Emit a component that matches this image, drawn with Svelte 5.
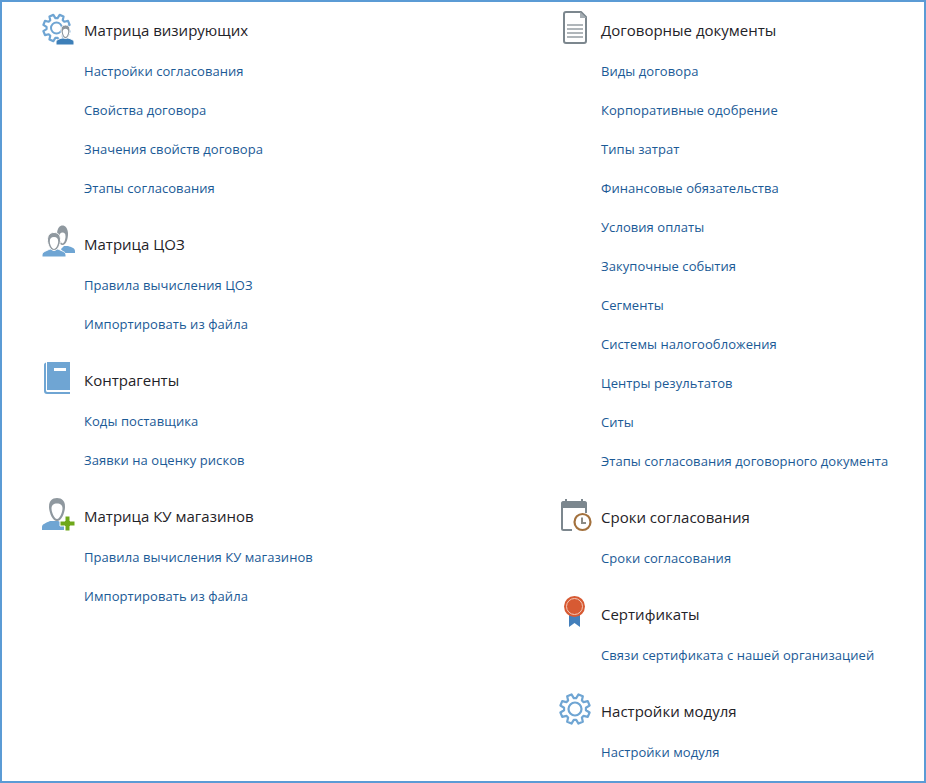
<script lang="ts">
  const leftSections = [
    { title: 'Матрица визирующих', icon: 'gearUser', links: ['Настройки согласования', 'Свойства договора', 'Значения свойств договора', 'Этапы согласования'] },
    { title: 'Матрица ЦОЗ', icon: 'users', links: ['Правила вычисления ЦОЗ', 'Импортировать из файла'] },
    { title: 'Контрагенты', icon: 'book', links: ['Коды поставщика', 'Заявки на оценку рисков'] },
    { title: 'Матрица КУ магазинов', icon: 'userPlus', links: ['Правила вычисления КУ магазинов', 'Импортировать из файла'] }
  ];
  const rightSections = [
    { title: 'Договорные документы', icon: 'doc', links: ['Виды договора', 'Корпоративные одобрение', 'Типы затрат', 'Финансовые обязательства', 'Условия оплаты', 'Закупочные события', 'Сегменты', 'Системы налогообложения', 'Центры результатов', 'Ситы', 'Этапы согласования договорного документа'] },
    { title: 'Сроки согласования', icon: 'calendar', links: ['Сроки согласования'] },
    { title: 'Сертификаты', icon: 'medal', links: ['Связи сертификата с нашей организацией'] },
    { title: 'Настройки модуля', icon: 'gear', links: ['Настройки модуля'] }
  ];
  const columns = [leftSections, rightSections];

  // 8-tooth gear outline
  function gear(cx: number, cy: number, rOut: number, rIn: number) {
    const step = Math.PI / 4;
    const pts: string[] = [];
    const at = (r: number, a: number) => `${(cx + r * Math.cos(a)).toFixed(2)} ${(cy + r * Math.sin(a)).toFixed(2)}`;
    for (let i = 0; i < 8; i++) {
      const a = i * step + Math.PI / 8;
      pts.push(at(rIn, a - step * 0.36), at(rOut, a - step * 0.2), at(rOut, a + step * 0.2), at(rIn, a + step * 0.36));
    }
    return 'M' + pts.join('L') + 'z';
  }
</script>

<div class="page">
  {#each columns as sections}
    <div class="column">
      {#each sections as section}
        <section class="section">
          <div class="heading">
            <svg class="icon" width="34" height="34" viewBox="0 0 34 34" fill="none">
              {#if section.icon === 'gearUser'}
                <path d={gear(15.5, 17, 13.500, 10)} stroke="#6fa5d3" stroke-width="2.200" stroke-linejoin="round"/>
                <circle cx="15.500" cy="17" r="5.500" stroke="#6fa5d3" stroke-width="2"/>
                <path d="M15 34v-3c0-2 3-3 6-4h6c3 1 6 2 6 4v3z" fill="#3d7fb8" stroke="#fff" stroke-width="1"/>
                <path d="M20 19c0-3.500 1.800-5 4.500-5s4.500 1.500 4.500 5c0 3.500-1.800 8.500-4.500 8.500S20 22.500 20 19z" fill="#8c959c" stroke="#fff" stroke-width="1"/>
                <path d="M21.800 20.500c0-2 1-2.800 2.700-2.800s2.700.8 2.700 2.800c0 2.500-1.400 5.500-2.700 5.500s-2.700-3-2.700-5.500z" fill="#fff"/>
              {:else if section.icon === 'users'}
                <path d="M20 24l3-3h4c3 1 7 2 7 5v2H22z" fill="#6fa5d3"/>
                <path d="M16 9c0-6 3-8.500 5.500-8.500S27 3 27 9c0 4-1.500 11-5.500 11S16 13 16 9z" fill="#8f989f"/>
                <path d="M18.500 11.500c0-3 1-4 3-4s3 1 3 4c0 3-1.500 7-3 7s-3-4-3-7z" fill="#fff"/>
                <path d="M1 32v-2c0-3 4-4 8-6h8c4 2 8 3 8 6v2z" fill="#6fa5d3" stroke="#fff" stroke-width="1"/>
                <path d="M6.500 15c0-5 2.500-7.500 6.500-7.500s6.500 2.500 6.500 7.500c0 4-2.500 10.500-6.500 10.500S6.500 19 6.500 15z" fill="#8f989f" stroke="#fff" stroke-width="1"/>
                <path d="M8.800 16.500c0-3 1.200-4.500 4.200-4.500s4.200 1.500 4.200 4.500c0 3-2.200 7.500-4.200 7.500s-4.200-4.500-4.200-7.500z" fill="#fff"/>
              {:else if section.icon === 'book'}
                <path d="M6 1h23v28H6z" fill="#6fa5d3"/>
                <path d="M5 1.500C3.500 2 3 3 3 4v26c0 2 1 3 3 3h23v-2H7c-1 0-2-.5-2-1.500z" fill="#6fa5d3"/>
                <rect x="13" y="7" width="12" height="3" fill="#fff"/>
              {:else if section.icon === 'userPlus'}
                <path d="M1 33v-3c0-3 4-4 8-6h8c3 1 5 2 6 3v6z" fill="#6fa5d3"/>
                <path d="M8 9.500C8 4 11 1 16 1s8 3 8 8.500C24 15 21 24 16 24S8 15 8 9.500z" fill="#8f989f"/>
                <path d="M10.500 11.500c0-3.500 2-5 5.500-5s5.500 1.500 5.500 5c0 4-3 10.500-5.500 10.500s-5.500-6.500-5.500-10.500z" fill="#fff"/>
                <path d="M24 19h5v5h5v5h-5v5h-5v-5h-5v-5h5z" fill="#6fa81a" stroke="#fff" stroke-width="1"/>
              {:else if section.icon === 'doc'}
                <path d="M8 1h15l5 5v24c0 1.500-1 2-2 2H8c-1 0-2-.5-2-2V3c0-1.500 1-2 2-2z" stroke="#7c878e" stroke-width="2" stroke-linejoin="round"/>
                <path d="M22 1v6h6.500z" fill="#a5adb3"/>
                <path d="M9 14h16M9 18h16M9 22h16M9 26h16" stroke="#b0b6ba" stroke-width="2"/>
              {:else if section.icon === 'calendar'}
                <path d="M3 5c0-1 1-2 2-2h22c1 0 2 1 2 2v5H3z" fill="#7c878e"/>
                <path d="M8 1v3M24 1v3" stroke="#7c878e" stroke-width="2"/>
                <path d="M4 9v21.500c0 1 .5 1.500 1.500 1.500H14M28 9v6" stroke="#7c878e" stroke-width="2"/>
                <circle cx="24.500" cy="24" r="8" fill="#fff" stroke="#a3713d" stroke-width="2.200"/>
                <path d="M24 19.500V25h4" stroke="#8b8b85" stroke-width="2"/>
              {:else if section.icon === 'medal'}
                <path d="M11 18h11v14l-5.500-4-5.500 4z" fill="#437fbb"/>
                <circle cx="16.500" cy="11.500" r="10.500" fill="#d75a33"/>
                <circle cx="16.500" cy="11.500" r="8" stroke="#f3c8b8" stroke-width="1"/>
              {:else}
                <path d={gear(17, 17, 15, 11)} stroke="#6fa5d3" stroke-width="2.200" stroke-linejoin="round"/>
                <circle cx="17" cy="17" r="6.500" stroke="#6fa5d3" stroke-width="2.200"/>
              {/if}
            </svg>
            <h2>{section.title}</h2>
          </div>
          <ul>
            {#each section.links as link}
              <li><a href="#top">{link}</a></li>
            {/each}
          </ul>
        </section>
      {/each}
    </div>
  {/each}
</div>

<style>
  :global(body) {
    margin: 0;
    background: #fff;
  }
  .page {
    box-sizing: border-box;
    width: 926px;
    height: 783px;
    border: 2px solid #5b9bd5;
    display: grid;
    grid-template-columns: 516px 1fr;
    padding-top: 8px;
    overflow: hidden;
    font-family: "Open Sans", "Liberation Sans", sans-serif;
  }
  .column {
    padding-left: 39px;
  }
  .column + .column {
    padding-left: 40px;
  }
  .section {
    margin-bottom: 16px;
  }
  .heading {
    display: flex;
    align-items: center;
    height: 40px;
    margin-bottom: 2px;
  }
  .icon {
    flex: none;
    margin: 0 9px 4px 0;
    overflow: visible;
  }
  h2 {
    margin: 0;
    font-size: 15px;
    font-weight: 400;
    color: #1f2328;
  }
  ul {
    list-style: none;
    margin: 0;
    padding: 0 0 0 43px;
  }
  li {
    height: 39px;
    line-height: 39px;
    font-size: 13px;
    letter-spacing: 0.06px;
    white-space: nowrap;
  }
  a {
    color: #1b5a96;
    text-decoration: none;
  }
</style>
